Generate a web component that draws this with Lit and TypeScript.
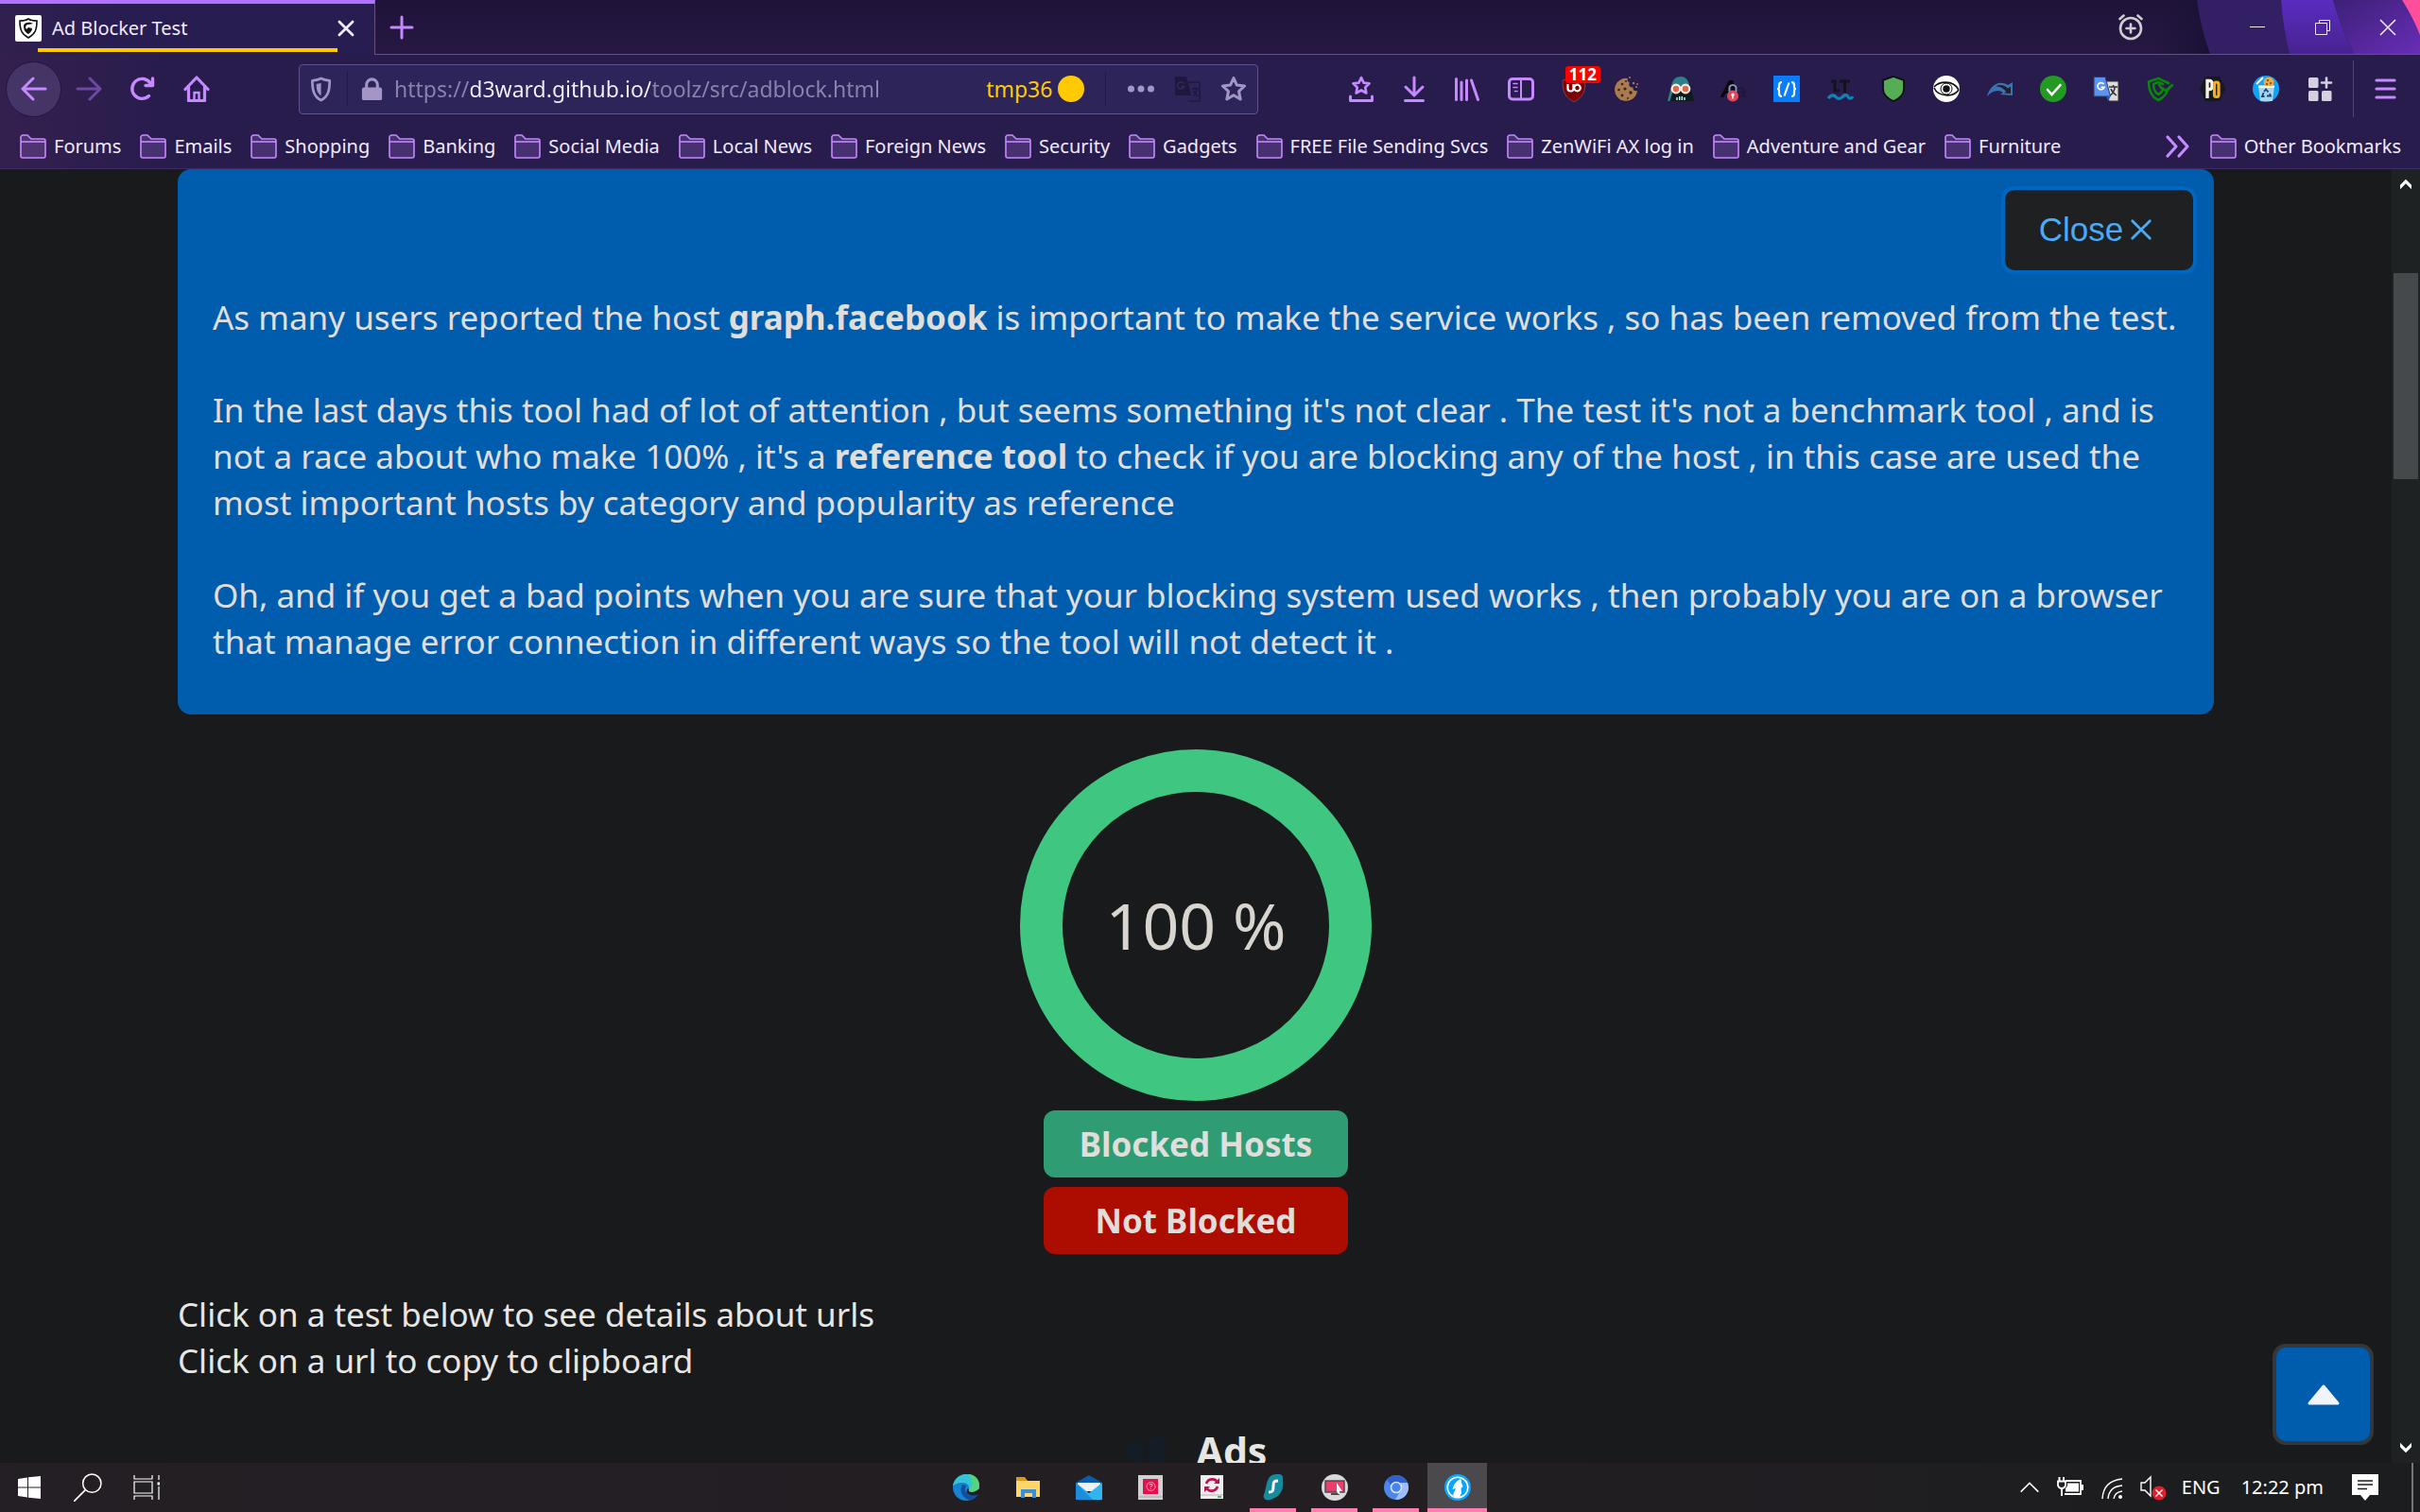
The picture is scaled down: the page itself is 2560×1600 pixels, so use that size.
import { LitElement, html, svg, css } from "lit";
import type { TemplateResult, SVGTemplateResult } from "lit";
import { customElement } from "lit/decorators.js";
import { classMap } from "lit/directives/class-map.js";

const icon = (body: SVGTemplateResult, size = 28): TemplateResult => html`
  <svg width=${size} height=${size} viewBox="0 0 28 28" fill="none" aria-hidden="true">${body}</svg>`;

const stroke = (d: string, width = 3): SVGTemplateResult =>
  svg`<path d=${d} stroke="currentColor" stroke-width=${width} stroke-linecap="round" stroke-linejoin="round"></path>`;

const folderIcon = icon(svg`
  <path d="M1 5a2.500 2.500 0 0 1 2-3h5l4 4h13a2 2 0 0 1 2 2v16a2 2 0 0 1-2 2H3a2 2 0 0 1-2-2z"
    fill="#c689ff" fill-opacity="0.200" stroke="#c689ff" stroke-width="1.600"></path>
  <path d="M1 9h26" stroke="#c689ff" stroke-width="1.600"></path>`);

interface Tool {
  label: string;
  art: SVGTemplateResult;
  badge?: string;
}

const tools: Tool[] = [
  {
    label: "Bookmarks menu",
    art: svg`${stroke("M14 2l2.600 5.600 6 .7-4.400 4.200 1.200 6L14 15.500l-5.400 3 1.200-6L5.400 8.300l6-.7z", 2.600)}
      ${stroke("M2.500 22v4.500h23V22")}`,
  },
  { label: "Downloads", art: svg`${stroke("M14 2v18M5 12l9 9 9-9M4.500 26.500h19")}` },
  { label: "Library", art: svg`${stroke("M2.500 3.500v22M8 7v18.500M13.500 5v20.500M18.500 5l7 20.500")}` },
  {
    label: "Sidebars",
    art: svg`<rect x="1.500" y="3.500" width="25" height="21.500" rx="3.500" stroke="currentColor" stroke-width="3"></rect>
      <path d="M14 3v22" stroke="currentColor" stroke-width="2"></path>${stroke("M6 8.500h4M6 12.500h4M7.500 16.500H10", 1.600)}`,
  },
  {
    label: "Content blocker",
    badge: "112",
    art: svg`<path d="M14 1c4 3 8 3 12 4 0 12-2 17-12 23C4 22 2 17 2 5c4-1 8-1 12-4z" fill="#800000" stroke="#6b4a5c" stroke-width="1"></path>
      <path d="M7.500 9v4.500a3 3 0 0 0 6 0V9M13.500 9v4" stroke="#fff" stroke-width="2.200"></path>
      <circle cx="17.500" cy="13" r="3.300" stroke="#fff" stroke-width="2.200"></circle>`,
  },
  {
    label: "Cookie manager",
    art: svg`<path d="M15 3a12 12 0 1 0 10 13c-3 1-5-1-4.500-3.500C17 13 15 10 17 7.500 15 7 14 5 15 3z" fill="#a97c50"></path>
      <g fill="#3b2312"><circle cx="9" cy="9" r="1.300"></circle><circle cx="5.500" cy="15" r="1.300"></circle><circle cx="12" cy="14" r="1.600"></circle>
      <circle cx="9" cy="21" r="1.400"></circle><circle cx="18" cy="18" r="1.700"></circle><circle cx="15" cy="24" r="1"></circle><circle cx="13" cy="6" r="1"></circle></g>
      <g fill="#a97c50"><circle cx="17" cy="2" r="1"></circle><circle cx="21" cy="8" r="1.200"></circle><circle cx="25" cy="9" r="1"></circle><circle cx="24" cy="12" r="1"></circle></g>`,
  },
  {
    label: "Privacy mask",
    art: svg`<path d="M14 1C8 1 5 5 4 11L0 27h28l-4-16C23 5 20 1 14 1z" fill="#0d1b21"></path>
      <path d="M14 1C8 1 5 5 4 11L0 27h2.500L7 12h14l2-3c-1.500-5-4-8-9-8z" fill="#2f7f8b"></path>
      <circle cx="9" cy="14" r="4.300" fill="#df6a4b" stroke="#ffe9df" stroke-width="2.200"></circle>
      <circle cx="19" cy="14" r="4.300" fill="#df6a4b" stroke="#ffe9df" stroke-width="2.200"></circle>
      <path d="M10 26v-3M12.700 26v-4M15.300 26v-4M18 26v-3" stroke="#cfe" stroke-width="1.400"></path>`,
  },
  {
    label: "Font blocker",
    art: svg`<text x="0" y="23" font-family="Liberation Sans" font-weight="700" font-style="italic" font-size="25" fill="#07070f">A</text>
      <text x="16" y="23" font-family="Liberation Sans" font-weight="700" font-size="21" fill="#1f183d">a</text>
      <path d="M9.500 17v-5a4 4 0 0 1 7 0v5" stroke="#8d9bb5" stroke-width="1.800"></path>
      <circle cx="13" cy="21.500" r="6" fill="#e0495b"></circle>
      <circle cx="13" cy="20.300" r="1.700" fill="#fff"></circle><path d="M13 20v4.500" stroke="#fff" stroke-width="1.400"></path>`,
  },
  {
    label: "Code injector",
    art: svg`<rect width="28" height="28" fill="#0a7cff"></rect>
      <path d="M9 7q-3 0-3 3v2q0 2-2 2 2 0 2 2v3q0 3 3 3M19 7q3 0 3 3v2q0 2 2 2-2 0-2 2v3q0 3-3 3M16.500 7.500l-5 14" stroke="#fff" stroke-width="2.200"></path>`,
  },
  {
    label: "Grammar checker",
    art: svg`<path d="M4 6h4v10h5M13 6h11M18.500 6v12" stroke="#15111f" stroke-width="3"></path>
      <path d="M1 24c3-4 6-4 8-1.500s5 2.500 7 0 5-2.500 6 0 4 2 5-.5" stroke="#0a86b8" stroke-width="3.200"></path>`,
  },
  {
    label: "Shield",
    art: svg`<path d="M14 1l11 4v9c0 6-4 10-11 13C7 24 3 20 3 14V5z" fill="#55ae55" stroke="#0d0d0d" stroke-width="1.800"></path>`,
  },
  {
    label: "Eye",
    art: svg`<circle cx="14" cy="14" r="14" fill="#fff"></circle>
      <path d="M1 12c5-6 20-8 26 3M1 13c4 9 20 11 26 2" stroke="#111" stroke-width="1.600"></path>
      <circle cx="14" cy="14" r="6" stroke="#111" stroke-width="1"></circle><circle cx="14" cy="14" r="3.700" fill="#111"></circle>`,
  },
  {
    label: "Redirector",
    art: svg`<path d="M0 22C2 13 11 3 22 10l5-3v14l-13-1 3-2c-5-4-12-2-17 4z" fill="#3a74b0"></path>
      <path d="M9 11.500c5-3 10-1 13 2l3-2v7.500l-7-.5 2-1.500c-3-4-6-5.500-11-5.500z" fill="#22202e"></path>`,
  },
  {
    label: "Safe browsing",
    art: svg`<circle cx="14" cy="14" r="14" fill="#239b23"></circle>
      <path d="M8 15l4.500 5 9-10" stroke="#fff" stroke-width="2.600" stroke-linecap="round"></path>`,
  },
  {
    label: "Translate",
    art: svg`<path d="M12 6h15v21H17z" fill="#dcdcdc" stroke="#333" stroke-width="1"></path>
      <path d="M17 12h9M21.500 10v2M18 21c3-2 5-5 5-9M19 14c1 3 3 5 6 7" stroke="#333" stroke-width="1.500"></path>
      <path d="M1 1.500h12l5.500 20.500H1z" fill="#5b93f2" stroke="#2d3c5e" stroke-width="1"></path>
      <path d="M14 22.500h4.500L16 27z" fill="#2b50b4"></path>
      <path d="M11.500 9a3.600 3.600 0 1 0 .5 3.300H8.500" stroke="#fff" stroke-width="1.700"></path>`,
  },
  {
    label: "Guard",
    art: svg`<path d="M23 8L12 3 2 6.500c0 10 3 16 10 19.500 6-3 9-7 10-11l5-5-7 6-4-3M17 9l-5-2-5 2c0 6 2 9 5 11 3-1 4-3 5-5l-4-5" stroke="#0b850b" stroke-width="2.600" stroke-linejoin="round" stroke-linecap="round"></path>`,
  },
  {
    label: "Popup opener",
    art: svg`<path d="M6 1h15l6 13-6 13H6L0 14z" fill="#14181f"></path>
      <path d="M8 24V5.500h2.500a2.500 2.500 0 0 1 2.500 2.500v4a2.500 2.500 0 0 1-2.500 2.500H8" stroke="#f6f1e0" stroke-width="3.400"></path>
      <rect x="15.500" y="7" width="4.500" height="15.500" rx="2" stroke="#f6ad1c" stroke-width="3.200"></rect>`,
  },
  {
    label: "Cookie cleaner",
    art: svg`<circle cx="14" cy="14" r="14" fill="#10a2f4"></circle><path d="M6 10h17l-2 17H8z" fill="#a6d6f5"></path>
      <circle cx="17" cy="7" r="5.500" fill="#e9a94a"></circle><circle cx="16" cy="5" r="1" fill="#6d3f12"></circle><circle cx="19" cy="8" r="1" fill="#6d3f12"></circle><circle cx="15" cy="9" r="1" fill="#6d3f12"></circle>
      <path d="M4 9l7-7" stroke="#fff" stroke-width="2"></path><path d="M6 12h17" stroke="#e9f8ff" stroke-width="2"></path>
      <path d="M12 17l2-2.500 2.500 3M18 19l1 2.500h-4M12.500 22H10l1.500-4" stroke="#1c4a6b" stroke-width="1.900"></path>`,
  },
  {
    label: "Extensions",
    art: svg`<g fill="#d5cfe2"><rect x="2" y="2" width="10.500" height="11" rx="1.500"></rect><rect x="2" y="16" width="10.500" height="11" rx="1.500"></rect>
      <rect x="16" y="16" width="10.500" height="11" rx="1.500"></rect></g><path d="M21 2.500v10M16 7.500h10" stroke="#d5cfe2" stroke-width="2.600" stroke-linecap="round"></path>`,
  },
];

const bookmarks = [
  "Forums", "Emails", "Shopping", "Banking", "Social Media", "Local News", "Foreign News",
  "Security", "Gadgets", "FREE File Sending Svcs", "ZenWiFi AX log in", "Adventure and Gear", "Furniture",
];

interface TaskApp {
  label: string;
  state: "idle" | "open" | "active";
  art: SVGTemplateResult;
}

const taskApps: TaskApp[] = [
  {
    label: "Edge",
    state: "idle",
    art: svg`<circle cx="14" cy="14" r="14" fill="#1583d2"></circle>
      <path d="M0 13C1 4 8 0 15 0c8 0 13 6 13 12 0 5-4 7-8 7-3 0-4-1-3-3 1-5-3-7-7-7-5 0-9 2-10 4z" fill="#35c4d6"></path>
      <path d="M16 0c8 0 12 6 12 12 0 5-4 7-8 7-3 0-4-1-3-3 5-3 5-10-1-16z" fill="#63d862" fill-opacity="0.750"></path>
      <path d="M10 11c-4 6 0 15 9 16.500C23 27 26 23 27 21c-5 2-10 2-13-2-2-3-1-5 0-7z" fill="#104f9f"></path>
      <path d="M17 16c-1 2 0 3 3 3 2 0 5-1 7-3h1v5c-4 2-10 2-13-1-1-3 0-6 2-4z" fill="#221e22"></path>`,
  },
  {
    label: "File Explorer",
    state: "idle",
    art: svg`<path d="M2 3h9l3 4v4H2z" fill="#d89a17"></path><path d="M2 7h25v17H2z" fill="#ffd766"></path>
      <path d="M7 16h16v9h-4v-5h-8v5H7z" fill="#3b8edb"></path>`,
  },
  {
    label: "Mail",
    state: "idle",
    art: svg`<path d="M0 9l14-8 14 8v5H0z" fill="#0a5cab"></path><path d="M2 9h24v9H2z" fill="#f1f1f1"></path>
      <path d="M0 9l14 11L28 9v18H0z" fill="#30b5f0"></path><path d="M0 9l18 18H0z" fill="#1a8ddd"></path>`,
  },
  {
    label: "Dictionary",
    state: "idle",
    art: svg`<rect x="1" y="1" width="26" height="26" fill="#d2d0d2"></rect><rect x="6" y="5" width="16" height="16" fill="#e2114e"></rect>
      <circle cx="14.500" cy="13" r="4.500" stroke="#ff9db4" stroke-width="1"></circle>
      <text x="14.500" y="16" text-anchor="middle" font-family="Inter" font-size="8" fill="#ffd0dc">?</text><path d="M1 24h26" stroke="#aaa"></path>`,
  },
  {
    label: "Sync",
    state: "idle",
    art: svg`<rect x="2" y="1" width="24" height="25" fill="#f0eef0"></rect><path d="M2 22h24" stroke="#b5b5b5"></path>
      <path d="M8 10c2-6 10-6 12-1M20 13c-2 6-10 6-12 1" stroke="#c4104a" stroke-width="2.600"></path>
      <path d="M22 4v6h-6zM6 19v-6h6z" fill="#c4104a"></path><path d="M20 24h4" stroke="#3aa657" stroke-width="1.600"></path>`,
  },
  {
    label: "VPN",
    state: "open",
    art: svg`<path d="M14 0.500c5-1 10-1 10 3v9c0 8-8 14-16 15-4 0-5-3-4-6C7 16 6 2.500 14 .5z" fill="#178a9e"></path>
      <path d="M19 7c-4 0-5 1-5 5 0 5 0 7-5 7" stroke="#fff" stroke-width="3"></path>`,
  },
  {
    label: "Remote Desktop",
    state: "open",
    art: svg`<circle cx="14" cy="14" r="14" fill="#d9d8da"></circle><rect x="4" y="7" width="20" height="12" fill="#ee3a6c" stroke="#48464b" stroke-width="1.400"></rect>
      <path d="M10 20h9v2h-9z" fill="#4b494c"></path><path d="M16 9l6 9-3-.3.500 3-1.500.5-2-3z" fill="#fff"></path>`,
  },
  {
    label: "Chromium",
    state: "open",
    art: svg`<circle cx="14" cy="14" r="13" fill="#4f86ea"></circle><path d="M14 1a13 13 0 0 1 12 8H14a5 5 0 0 0-5 3L4 6a13 13 0 0 1 10-5z" fill="#2f62cd"></path>
      <path d="M26 9a13 13 0 0 1-13 18l6-11V9z" fill="#9dbef8"></path><circle cx="14" cy="14" r="5.500" fill="#4a82ee" stroke="#d6e4fd" stroke-width="1.600"></circle>`,
  },
  {
    label: "LibreWolf",
    state: "active",
    art: svg`<circle cx="14" cy="14" r="14" fill="#0ba5fb"></circle><circle cx="14" cy="14" r="10.800" stroke="#fff" stroke-width="1.600"></circle>
      <path d="M17.500 5l.5 4 1.500 4-2 2 .5 5-2 4h-4l-3-2 3-7-3.500 1c1-5 4-9 9-11z" fill="#fff"></path>`,
  },
];

@customElement("app-root")
export class AppRoot extends LitElement {
  static styles = css`
    :host {
      display: flex;
      flex-direction: column;
      height: 100vh;
      overflow: hidden;
      background: #181a1b;
      color: #e8e6e3;
      font-family: "Noto Sans", "Open Sans", sans-serif;
      font-size: 20px;
    }
    * { box-sizing: border-box; }
    svg { display: block; flex: none; }
    button {
      display: flex;
      align-items: center;
      justify-content: center;
      flex: none;
      margin: 0;
      padding: 0;
      border: 0;
      background: none;
      color: inherit;
      font: inherit;
    }
    p, h2 { margin: 0; }

    .titlebar {
      display: flex;
      height: 58px;
      background: linear-gradient(#20133a, #261842);
      border-bottom: 1px solid #65527f;
    }
    .tabs { position: relative; display: flex; }
    .tab {
      display: flex;
      align-items: center;
      gap: 11px;
      width: 397px;
      height: 58px;
      padding: 0 19px 2px 16px;
      border-top: 4px solid #b072ff;
      border-right: 1px solid #65527f;
      background: linear-gradient(90deg, #30204f, #281d50 120px);
      color: #f0eaff;
    }
    .tab-title { flex: 1; line-height: 28px; }
    .container-line {
      position: absolute;
      left: 40px;
      top: 51px;
      width: 317px;
      height: 4px;
      background: #ffcb00;
    }
    .new-tab { width: 56px; color: #c689ff; }
    .title-space { flex: 1; }
    .reminder { width: 28px; margin-right: 12px; color: #cfccd2; }
    .window-controls {
      position: relative;
      display: flex;
      padding-left: 73px;
      height: 57px;
      color: #f0eaff;
    }
    .window-art { position: absolute; left: 0; top: 0; }
    .window-button { position: relative; width: 69px; }

    .navbar {
      display: flex;
      align-items: center;
      height: 72px;
      padding: 0 5px 0 6px;
      background: linear-gradient(90deg, #34204f, #281c4d 180px);
      color: #c689ff;
    }
    .nav-buttons { display: flex; align-items: center; flex: none; }
    .back { width: 59px; height: 59px; border: 1px solid #201640; border-radius: 50%; background: #443566; }
    .nav-button { width: 57px; height: 57px; }
    .forward { color: #6c4a9f; }
    .urlbar {
      display: flex;
      align-items: center;
      flex: 1;
      min-width: 0;
      height: 53px;
      margin: 0 80px;
      padding: 0 1px 0 11px;
      border: 1px solid #63538f;
      border-radius: 4px;
      background: #2d245a;
      color: #a396c4;
    }
    .rule { width: 1px; height: 38px; background: #231a45; margin: 0 12px; }
    .url {
      flex: 1;
      min-width: 0;
      height: 40px;
      margin-left: 10px;
      padding: 0;
      border: 0;
      outline: 0;
      font: 23px/40px "Noto Sans", "Open Sans", sans-serif;
      background: linear-gradient(90deg, #8d82ad 81px, #f4effc 81px, #f4effc 271px, #8d82ad 271px);
      -webkit-background-clip: text;
      background-clip: text;
      color: transparent;
    }
    .container-name { color: #ffcb00; font-size: 23px; line-height: 40px; margin-right: 6px; }
    .container-dot { width: 28px; height: 28px; border-radius: 50%; background: #ffcb00; margin-right: 10px; }
    .url-action { width: 49px; }
    .tools { display: flex; flex: 0 0 42%; }
    .tool { position: relative; flex: 1; height: 56px; }
    .badge {
      position: absolute;
      left: 19px;
      top: 4px;
      padding: 0 4px;
      border-radius: 3px;
      background: #f00;
      color: #fff;
      font-size: 17px;
      font-weight: 700;
      line-height: 18px;
    }
    .menu { width: 66px; height: 60px; margin-left: 7px; border-left: 1px solid #59407f; }

    .bookmarks {
      display: flex;
      align-items: center;
      gap: 20px;
      height: 49px;
      padding: 2px 20px 0 21px;
      border-bottom: 1px solid #3d2c68;
      background: linear-gradient(90deg, #34204f, #281c4d 180px);
      color: #f0eaff;
    }
    .bookmark { gap: 8px; line-height: 28px; white-space: nowrap; }
    .overflow { margin-left: auto; color: #c689ff; }

    .viewport { display: flex; flex: 1; min-height: 0; position: relative; }
    .page {
      flex: 1;
      min-width: 0;
      overflow: hidden;
      padding: 0 188px;
      font-size: 35px;
      line-height: 49px;
    }
    .notice {
      display: flex;
      flex-direction: column;
      padding: 18px 18px 53px 37px;
      border-radius: 14px;
      background: #005dad;
      color: #e0dedb;
      white-space: nowrap;
    }
    .notice p + p { margin-top: 49px; }
    .close {
      align-self: flex-end;
      gap: 6px;
      width: 207px;
      height: 93px;
      margin-bottom: 21px;
      padding: 0 6px 2px 0;
      border: 4px solid #0067c0;
      border-radius: 14px;
      background: #1e2021;
      color: #4aabf7;
      font: 35px/40px "Liberation Sans", sans-serif;
    }
    .score { display: flex; flex-direction: column; align-items: center; gap: 10px; padding-top: 37px; }
    .ring {
      display: flex;
      align-items: center;
      justify-content: center;
      width: 372px;
      height: 372px;
      border: 45px solid #3fc680;
      border-radius: 50%;
      color: #d8d4cf;
      font-size: 68px;
      line-height: 80px;
    }
    .result { width: 322px; height: 71px; border-radius: 12px; color: #e0dedb; font-weight: 700; }
    .blocked { background: #2f9c73; }
    .not-blocked { background: #ad0c00; }
    .hints { padding-top: 39px; }
    .category { display: flex; justify-content: center; gap: 30px; margin-top: 47px; font-size: 41px; line-height: 49px; }
    .category svg { color: #141c26; }

    .scrollbar {
      display: flex;
      flex-direction: column;
      align-items: center;
      flex: none;
      width: 30px;
      background: #1e2223;
      color: #fff;
    }
    .scroll-step { width: 30px; height: 32px; }
    .scroll-track { flex: 1; padding-top: 78px; }
    .thumb { width: 26px; height: 218px; background: #45494b; }
    .to-top {
      position: absolute;
      right: 49px;
      bottom: 19px;
      width: 107px;
      height: 107px;
      border: 4px solid #34383b;
      border-radius: 14px;
      background: #005dad;
      color: #f3f4f9;
    }

    .taskbar {
      display: grid;
      grid-template-columns: 1fr auto 1fr;
      height: 52px;
      flex: none;
      background: linear-gradient(90deg, #241f24, #221e22 60%, #1b1d1f);
      color: #fff;
    }
    .start { display: flex; align-items: center; }
    .start-button { width: 62px; height: 52px; }
    .apps { display: flex; gap: 2px; padding-left: 3px; }
    .app { width: 63px; height: 52px; border-bottom: 4px solid transparent; padding-top: 4px; }
    .app.open { width: 49px; margin: 0 7px; border-color: #ff7eb2; }
    .app.active { border-color: #ff7eb2; background: #4b494d; }
    .tray { display: flex; align-items: center; justify-content: flex-end; gap: 16px; }
    .tray-text { white-space: nowrap; line-height: 28px; }
    .clock { margin: 0 14px 0 6px; }
    .notifications { margin-right: 19px; }
    .peek { width: 9px; height: 52px; border-left: 2px solid #77757a; }
  `;

  private renderTitlebar() {
    return html`
      <header class="titlebar">
        <div class="tabs">
          <div class="tab">
            ${icon(svg`<rect width="28" height="28" rx="2" fill="#fff"></rect>
              <path d="M14 4c3 2 6 2 9 2 0 10-2 14-9 18C7 20 5 16 5 6c3 0 6 0 9-2z" stroke="#111" stroke-width="1.600"></path>
              <path d="M19 9c-3-2-9-2-10 2 0 4 1 7 5 9 3-2 4-4 4-6l-4-1-2 2c-2-3 0-5 2-5z" fill="#111"></path>`)}
            <span class="tab-title">Ad Blocker Test</span>
            <button aria-label="Close tab">${icon(svg`<path d="M5 5l18 18M23 5L5 23" stroke="currentColor" stroke-width="3.500" stroke-linecap="round"></path>`, 22)}</button>
          </div>
          <span class="container-line"></span>
        </div>
        <button class="new-tab" aria-label="New tab">${icon(stroke("M14 3v22M3 14h22"))}</button>
        <span class="title-space"></span>
        <button class="reminder" aria-label="Reminder">
          ${icon(svg`<circle cx="14" cy="15" r="11" stroke="currentColor" stroke-width="2.600"></circle>
            ${stroke("M14 10.500v9M9.500 15h9", 2.600)}${stroke("M2.500 5l4-3.500M25.500 5l-4-3.500", 2.600)}`)}
        </button>
        <div class="window-controls">
          <svg class="window-art" width="280" height="57" viewBox="0 0 280 57" aria-hidden="true">
            <defs>
              <linearGradient id="shade"><stop offset="0" stop-color="#1c1238" stop-opacity="0"></stop><stop offset="1" stop-color="#1a1035"></stop></linearGradient>
              <linearGradient id="violet" x2="0" y2="1"><stop offset="0" stop-color="#5a2cc0"></stop><stop offset="1" stop-color="#47238f"></stop></linearGradient>
              <linearGradient id="plum" x2="1" y2="1"><stop offset="0" stop-color="#3d2076"></stop><stop offset="1" stop-color="#682db8"></stop></linearGradient>
            </defs>
            <path d="M0 0h44q4 30 14 57H0z" fill="url(#shade)"></path>
            <path d="M44 0h89q2 30 9 57H58Q48 30 44 0z" fill="#331f64"></path>
            <path d="M133 0h55q9 30 22 57h-68q-7-27-9-57z" fill="url(#violet)"></path>
            <path d="M188 0h92v57h-70Q197 30 188 0z" fill="url(#plum)"></path>
            <path d="M261 0h19v37q-8-20-19-37z" fill="#ff4f9a"></path>
          </svg>
          <button class="window-button" aria-label="Minimize">${icon(svg`<path d="M6 13.500h16" stroke="currentColor" stroke-width="1"></path>`)}</button>
          <button class="window-button" aria-label="Restore">${icon(svg`<path d="M6.500 9.500h12v12h-12zM10.500 9.500v-3h11v11h-3" stroke="currentColor" stroke-width="1"></path>`)}</button>
          <button class="window-button" aria-label="Close window">${icon(svg`<path d="M6 6l16 16M22 6L6 22" stroke="currentColor" stroke-width="1.600"></path>`)}</button>
        </div>
      </header>`;
  }

  private renderNavbar() {
    return html`
      <nav class="navbar" aria-label="Navigation">
        <div class="nav-buttons">
          <button class="back" aria-label="Back">${icon(stroke("M26 14H2M13 3L2 14l11 11"))}</button>
          <button class="nav-button forward" aria-label="Forward">${icon(stroke("M2 14h24M15 3l11 11-11 11"))}</button>
          <button class="nav-button" aria-label="Reload">${icon(stroke("M20.500 21.500A10.500 10.500 0 1 1 22 8M24.500 3v7.500H17", 3.400))}</button>
          <button class="nav-button" aria-label="Home">
            ${icon(svg`${stroke("M2 14.500L14 2l12 12.500M5.500 12v14.500h17V12", 3.200)}<path d="M11.500 27v-9h5v9" stroke="currentColor" stroke-width="2.400"></path>`)}
          </button>
        </div>
        <div class="urlbar">
          ${icon(svg`<path d="M12 2c3 1.500 6 2 9.500 2.500C21.500 15 20 22 12 26 4 22 2.500 15 2.500 4.500 6 4 9 3.500 12 2z" stroke="currentColor" stroke-width="2.800" stroke-linejoin="round"></path>
            <path d="M12 7v14c-4-3-5-6-5-13 2 0 3-.3 5-1z" fill="currentColor"></path>`, 27)}
          <span class="rule"></span>
          ${icon(svg`<rect x="3" y="12" width="22" height="14" rx="2" fill="currentColor"></rect><path d="M8 13V9a6 6 0 0 1 12 0v4" stroke="currentColor" stroke-width="3.200"></path>`, 27)}
          <input class="url" type="text" aria-label="Address" .value=${"https://d3ward.github.io/toolz/src/adblock.html"} />
          <span class="container-name">tmp36</span>
          <span class="container-dot"></span>
          <span class="rule"></span>
          <button class="url-action" aria-label="Page actions">${icon(svg`<g fill="currentColor"><circle cx="3.500" cy="14" r="3.500"></circle><circle cx="14" cy="14" r="3.500"></circle><circle cx="24.500" cy="14" r="3.500"></circle></g>`)}</button>
          <button class="url-action" aria-label="Translate page">
            ${icon(svg`<path d="M1 1h12l5 20H1z" fill="#20173f"></path><path d="M15 7h12v20H15" stroke="#241a45" stroke-width="1.800"></path>
              <path d="M19 14h7M22 12v2M20 22c2-2 4-4 4-8M20 16l5 6" stroke="#20173f" stroke-width="1.500"></path>
              <path d="M10 8.500a3.500 3.500 0 1 0 .5 3H7.500" stroke="#33295f" stroke-width="1.500"></path>`)}
          </button>
          <button class="url-action" aria-label="Bookmark this page">${icon(stroke("M14 2.500l3.400 7.600 8.200.9-6.100 5.600 1.700 8.400-7.200-4.300L6.800 25l1.700-8.400L2.400 11l8.200-.9z"))}</button>
        </div>
        <div class="tools">
          ${tools.map((t) => html`<button class="tool" aria-label=${t.label}>${icon(t.art)}${t.badge ? html`<span class="badge">${t.badge}</span>` : ""}</button>`)}
        </div>
        <button class="menu" aria-label="Menu">${icon(stroke("M5 5h19M5 14h19M5 23h19", 3.200))}</button>
      </nav>`;
  }

  private renderBookmarks() {
    return html`
      <nav class="bookmarks" aria-label="Bookmarks">
        ${bookmarks.map((b) => html`<button class="bookmark">${folderIcon}<span>${b}</span></button>`)}
        <button class="overflow" aria-label="More bookmarks">${icon(stroke("M3 4l9 10-9 10M15 4l9 10-9 10", 3.200))}</button>
        <button class="bookmark">${folderIcon}<span>Other Bookmarks</span></button>
      </nav>`;
  }

  private renderPage() {
    return html`
      <main class="viewport">
        <div class="page">
          <section class="notice">
            <button class="close">Close ${icon(stroke("M4 4l20 20M24 4L4 24", 3), 26)}</button>
            <p>As many users reported the host <b>graph.facebook</b> is important to make the service works , so has been removed from the test.</p>
            <p>In the last days this tool had of lot of attention , but seems something it's not clear . The test it's not a benchmark tool , and is<br />
              not a race about who make 100% , it's a <b>reference tool</b> to check if you are blocking any of the host , in this case are used the<br />
              most important hosts by category and popularity as reference</p>
            <p>Oh, and if you get a bad points when you are sure that your blocking system used works , then probably you are on a browser<br />
              that manage error connection in different ways so the tool will not detect it .</p>
          </section>
          <section class="score">
            <div class="ring">100 %</div>
            <button class="result blocked">Blocked Hosts</button>
            <button class="result not-blocked">Not Blocked</button>
          </section>
          <section class="hints">
            <p>Click on a test below to see details about urls</p>
            <p>Click on a url to copy to clipboard</p>
          </section>
          <h2 class="category">
            ${icon(svg`<path d="M1 12q0-3 3-3h8v12H4q-3 0-3-3zM14 9l12-7v26l-12-7zM5 21h7v7H7z" fill="currentColor"></path>`, 46)}
            <span>Ads</span>
          </h2>
        </div>
        <div class="scrollbar">
          <button class="scroll-step" aria-label="Scroll up">${icon(svg`<path d="M7 20v-5l7-7 7 7v5l-7-7z" fill="currentColor"></path>`, 24)}</button>
          <div class="scroll-track"><div class="thumb"></div></div>
          <button class="scroll-step" aria-label="Scroll down">${icon(svg`<path d="M7 8v5l7 7 7-7V8l-7 7z" fill="currentColor"></path>`, 24)}</button>
        </div>
        <button class="to-top" aria-label="Back to top">
          <svg width="34" height="22" viewBox="0 0 34 22" aria-hidden="true"><path d="M17 2L32 20H2z" fill="currentColor" stroke="currentColor" stroke-width="3" stroke-linejoin="round"></path></svg>
        </button>
      </main>`;
  }

  private renderTaskbar() {
    return html`
      <footer class="taskbar">
        <div class="start">
          <button class="start-button" aria-label="Start">
            ${icon(svg`<path d="M2 5l10-1.500v10H2zM13 3.300L26 2v11.500H13zM2 14.500h10v10L2 23zM13 14.500h13V26l-13-1.300z" fill="currentColor"></path>`)}
          </button>
          <button class="start-button" aria-label="Search">${icon(svg`<circle cx="18" cy="10" r="9" stroke="currentColor" stroke-width="1.400"></circle><path d="M11.500 16.500L0 28" stroke="currentColor" stroke-width="1.600"></path>`, 30)}</button>
          <button class="start-button" aria-label="Task view">${icon(svg`<path d="M1 1v4h19V1M1 8h19v12H1zM1 27v-4h19v4M27 1v5M27 13v14" stroke="currentColor" stroke-width="1.200"></path><path d="M25.500 8.500h3v3h-3z" fill="currentColor"></path>`)}</button>
        </div>
        <div class="apps">
          ${taskApps.map((a) => html`<button aria-label=${a.label} class=${classMap({ app: true, open: a.state === "open", active: a.state === "active" })}>${icon(a.art)}</button>`)}
        </div>
        <div class="tray">
          <button aria-label="Show hidden icons">${icon(svg`<path d="M4 19l10-10 10 10" stroke="currentColor" stroke-width="1.600"></path>`, 26)}</button>
          <button aria-label="Battery">${icon(svg`<path d="M9 7h16v14H8" stroke="currentColor" stroke-width="1.800"></path><path d="M25 11h3v6h-3z" fill="currentColor"></path><path d="M11 9.500h12v9H9V15q2-2 2-3z" fill="currentColor"></path>
            <path d="M2.500 3v5M7 3v5M5 15v8" stroke="currentColor" stroke-width="2"></path><path d="M1 7.500h8V12q-1 3-4 3t-4-3z" fill="#221e22" stroke="currentColor" stroke-width="1.800"></path>`)}</button>
          <button aria-label="Network">${icon(svg`<path d="M4 26Q5 7 25 5M10 26q1-13 15-14M16 26q1-7 9-8" stroke="currentColor" stroke-width="1.400"></path><circle cx="23" cy="24" r="2" fill="currentColor"></circle>`)}</button>
          <button aria-label="Volume muted">${icon(svg`<path d="M1 9h4l6-6v20l-6-6H1z" stroke="currentColor" stroke-width="1.400"></path><circle cx="20" cy="20" r="7.500" fill="#dc1f2c"></circle>
            <path d="M16.500 16.500l7 7M23.500 16.500l-7 7" stroke="#fff" stroke-width="1.400"></path>`)}</button>
          <span class="tray-text">ENG</span>
          <span class="tray-text clock">12:22 pm</span>
          <button class="notifications" aria-label="Notifications">${icon(svg`<path d="M0 0h28v22h-9l-5 6-5-6H0z" fill="currentColor"></path><path d="M6 7h16M6 11h16M6 15.500h10" stroke="#1d1d20" stroke-width="1.500"></path>`)}</button>
          <span class="peek"></span>
        </div>
      </footer>`;
  }

  render() {
    return html`${this.renderTitlebar()}${this.renderNavbar()}${this.renderBookmarks()}${this.renderPage()}${this.renderTaskbar()}`;
  }
}
